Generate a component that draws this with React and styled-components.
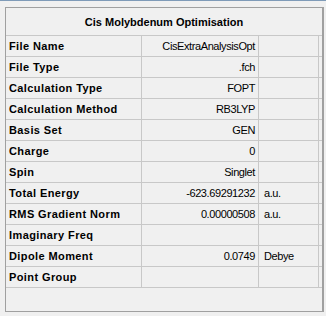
import styled, { createGlobalStyle } from "styled-components";

const GlobalStyle = createGlobalStyle`
  html, body {
    margin: 0;
    padding: 0;
    background: #f0f0f0;
  }
  body {
    font-family: "Liberation Sans", Arial, sans-serif;
    color: #000000;
  }
`;

const rows = [
  { label: "File Name", value: "CisExtraAnalysisOpt" },
  { label: "File Type", value: ".fch" },
  { label: "Calculation Type", value: "FOPT" },
  { label: "Calculation Method", value: "RB3LYP" },
  { label: "Basis Set", value: "GEN" },
  { label: "Charge", value: "0" },
  { label: "Spin", value: "Singlet" },
  { label: "Total Energy", value: "-623.69291232", unit: "a.u." },
  { label: "RMS Gradient Norm", value: "0.00000508", unit: "a.u." },
  { label: "Imaginary Freq", value: "" },
  { label: "Dipole Moment", value: "0.0749", unit: "Debye" },
  { label: "Point Group", value: "" },
];

const Window = styled.div`
  width: 326px;
  height: 316px;
  border-top: 1px solid #7f9bb8;
  box-sizing: border-box;
  padding: 6px 0 0 5px;
`;

const Frame = styled.div`
  width: 319px;
  height: 305px;
  box-sizing: border-box;
  border: 1px solid #a0a0a0;
  border-right-width: 2px;
  display: flex;
  flex-direction: column;
`;

const Title = styled.div`
  height: 27px;
  border-bottom: 1px solid #c8c8c8;
  display: flex;
  align-items: center;
  justify-content: center;
  font-size: 11px;
  font-weight: 700;
  padding-top: 1px;
  box-sizing: content-box;
  height: 26px;
`;

const Row = styled.div`
  display: grid;
  grid-template-columns: 136px 117px 60px;
  height: 20px;
  border-bottom: 1px solid #c8c8c8;
`;

const Cell = styled.div`
  display: flex;
  align-items: center;
  border-right: 1px solid #c8c8c8;
  font-size: 11px;
  white-space: nowrap;
  overflow: hidden;
  padding: 0 ${(p) => (p.$align === "right" ? "3px" : "0")} 0
    ${(p) => p.$pad || "0"};
  justify-content: ${(p) => (p.$align === "right" ? "flex-end" : "flex-start")};
  font-weight: ${(p) => (p.$bold ? 700 : 400)};
  letter-spacing: ${(p) => (p.$bold ? "0.4px" : "-0.4px")};
`;

export default function App() {
  return (
    <>
      <GlobalStyle />
      <Window>
        <Frame>
          <Title>Cis Molybdenum Optimisation</Title>
          {rows.map((r) => (
            <Row key={r.label}>
              <Cell $bold $pad="3px">
                {r.label}
              </Cell>
              <Cell $align="right">{r.value}</Cell>
              <Cell $pad="5px">{r.unit}</Cell>
            </Row>
          ))}
        </Frame>
      </Window>
    </>
  );
}
